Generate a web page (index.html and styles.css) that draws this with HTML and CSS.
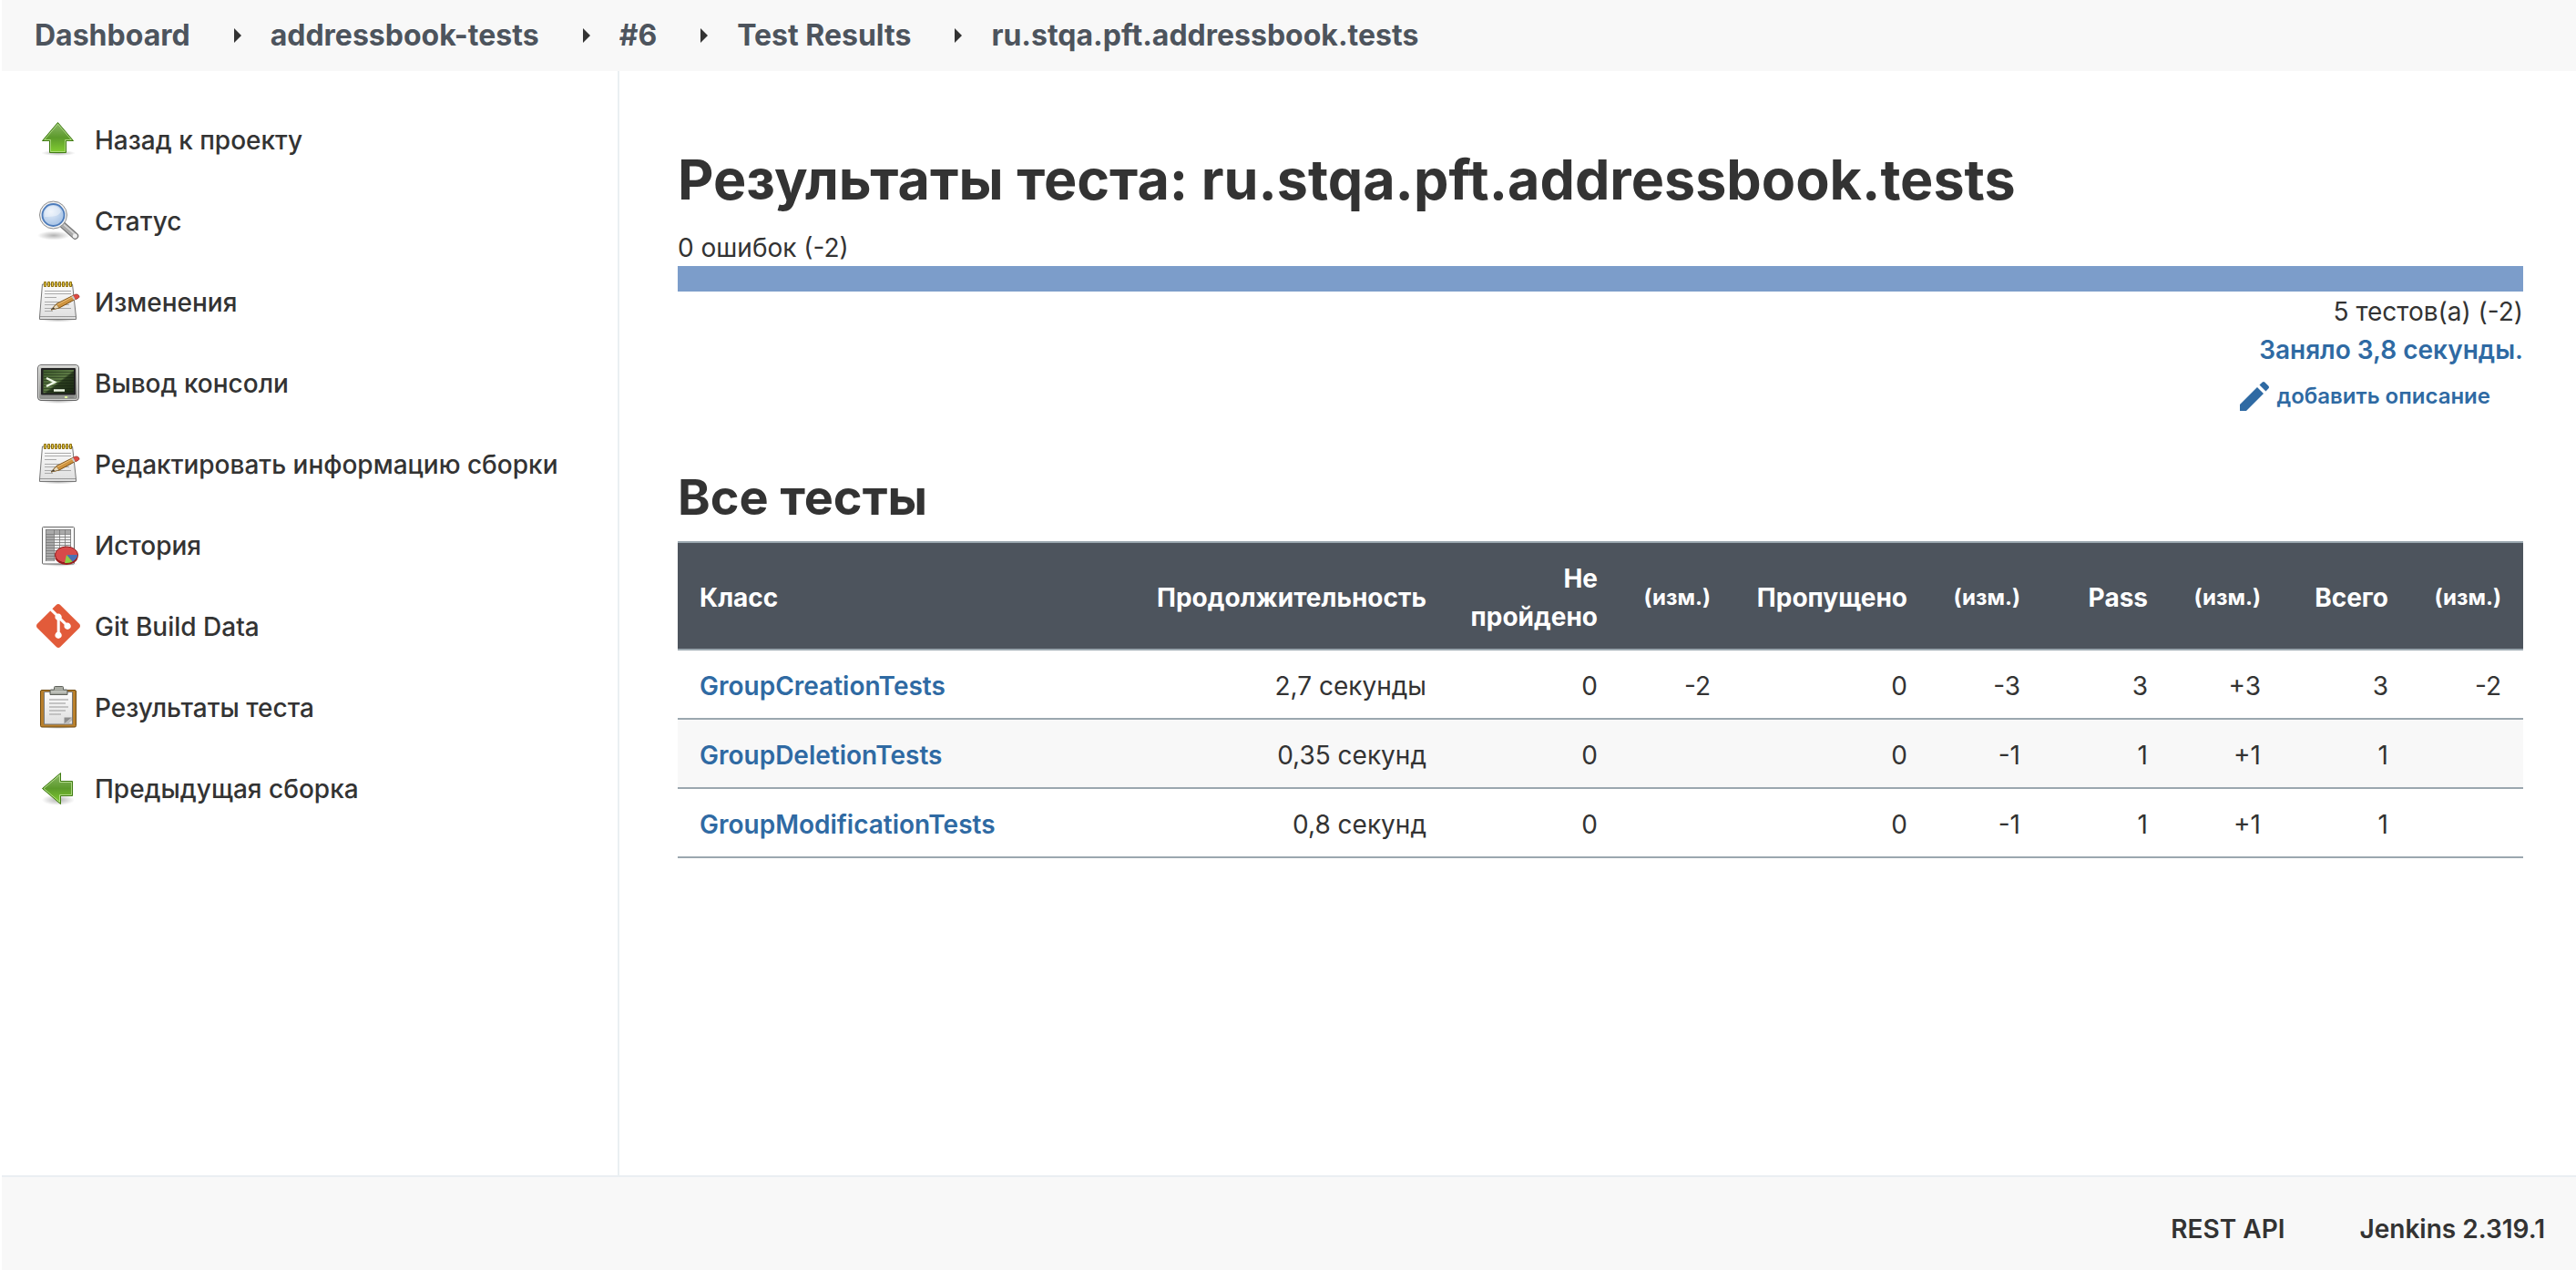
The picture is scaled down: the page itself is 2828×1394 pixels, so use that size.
FILE: index.html
```html
<!DOCTYPE html>
<html lang="ru">
<head>
<meta charset="utf-8">
<title>Результаты теста: ru.stqa.pft.addressbook.tests</title>
<link rel="stylesheet" href="styles.css">
</head>
<body>
<svg class="defs" aria-hidden="true">
  <defs>
    <linearGradient id="green" x1="0" y1="0" x2="0" y2="1"><stop offset="0" stop-color="#8db86a"/><stop offset=".5" stop-color="#5c9a2b"/><stop offset="1" stop-color="#83cf32"/></linearGradient>
    <linearGradient id="paper" x1="0" y1="0" x2="0" y2="1"><stop offset="0" stop-color="#fdfdfd"/><stop offset="1" stop-color="#dedede"/></linearGradient>
    <linearGradient id="metal" x1="0" y1="0" x2="0" y2="1"><stop offset="0" stop-color="#d4d5d1"/><stop offset="1" stop-color="#8b8d89"/></linearGradient>
    <linearGradient id="screen" x1="0" y1="0" x2="1" y2="1"><stop offset="0" stop-color="#3d5a2c"/><stop offset=".5" stop-color="#5d7a45"/><stop offset=".55" stop-color="#2b3d1f"/><stop offset="1" stop-color="#1c2a15"/></linearGradient>
    <radialGradient id="lens" cx=".4" cy=".35" r=".7"><stop offset="0" stop-color="#e6effa"/><stop offset="1" stop-color="#a3c0e4"/></radialGradient>
    <radialGradient id="shade"><stop offset="0" stop-color="#000" stop-opacity=".3"/><stop offset="1" stop-color="#000" stop-opacity="0"/></radialGradient>
    <symbol id="notepad" viewBox="0 0 48 48">
      <ellipse cx="24" cy="44" rx="20" ry="2.500" fill="url(#shade)"/>
      <path d="M6.500 5h33l4 36v2.500h-40V41z" fill="url(#paper)" stroke="#777" stroke-linejoin="round"/>
      <path d="M4 40.500h39" stroke="#999"/>
      <path d="M9 12.500h29M9 15.500h29M9 19.500h13M9 24.500h29M9 27.500h27M9 31.500h29M9 34.500h9" stroke="#aaa"/>
      <g fill="#e8cf50" stroke="#8a6b0a"><path d="M8.500 2.500h2v5h-2zM12.500 2.500h2v5h-2zM16.500 2.500h2v5h-2zM20.500 2.500h2v5h-2zM24.500 2.500h2v5h-2zM28.500 2.500h2v5h-2zM32.500 2.500h2v5h-2zM36.500 2.500h2v5h-2z"/></g>
      <path d="M16 33l6-6.500L41 17l2.500 4L25 31z" fill="#cf9440" stroke="#7a4e12" stroke-linejoin="round"/>
      <path d="M22.500 27.500L41 18" stroke="#eec27c"/>
      <path d="M16 33l6-6 3 4z" fill="#eadbbd" stroke="#7a5a28" stroke-width=".6"/><path d="M16 33l3-2.800 1 1.600z" fill="#333"/>
      <path d="M40 17.500l3-1.500q3-.5 4 2 .3 1.500-1 2.200l-3 1.600z" fill="#e04a42" stroke="#8e2a22" stroke-width=".7"/><path d="M38.500 18.200l1.800-.9 2.500 4.200-1.800.9z" fill="#c9cbc8"/>
    </symbol>
  </defs>
</svg>

<header class="topbar">
  <nav aria-label="Навигация">
    <ol class="crumbs">
      <li><a href="#">Dashboard</a></li>
      <li><a href="#">addressbook-tests</a></li>
      <li><a href="#">#6</a></li>
      <li><a href="#">Test Results</a></li>
      <li><a href="#">ru.stqa.pft.addressbook.tests</a></li>
    </ol>
  </nav>
</header>

<div class="page">
  <aside class="side">
    <nav class="tasks" aria-label="Задачи">
      <a href="#">
        <svg class="icon" viewBox="0 0 48 48"><ellipse cx="24" cy="39" rx="19" ry="3" fill="url(#shade)"/><path d="M23.500 5.500L40.500 25.500H32.500V38.500H14.500V25.500H6.500z" fill="url(#green)" stroke="#3f7a12" stroke-linejoin="round"/><path d="M23.500 7.200L38.400 24.500H31.500V37.500H15.500V24.500H8.700z" fill="none" stroke="#b6e08c" stroke-opacity=".8"/></svg>
        <span>Назад к проекту</span></a>
      <a href="#">
        <svg class="icon" viewBox="0 0 48 48"><ellipse cx="19" cy="40.500" rx="18" ry="5" fill="url(#shade)"/><path d="M29 29L42.500 41" stroke="#6e6e6e" stroke-width="7.500" stroke-linecap="round"/><path d="M29 29L42.500 41" stroke="#aaa" stroke-width="5.500" stroke-linecap="round"/><path d="M30 28.500L42 39" stroke="#d8d8d8" stroke-width="1.500"/><circle cx="42.300" cy="41" r="2.500" fill="#eee"/><circle cx="18.500" cy="18" r="15" fill="#f2f2f2" stroke="#8c8c8c"/><circle cx="18.500" cy="18" r="12" fill="url(#lens)" stroke="#4d7cbb" stroke-width="1.800"/><path d="M9 20a9.500 9.500 0 0 1 18-6q-2 5-9 5.500-5 .5-9 .5z" fill="#fff" opacity=".4"/></svg>
        <span>Статус</span></a>
      <a href="#"><svg class="icon"><use href="#notepad"/></svg><span>Изменения</span></a>
      <a href="#">
        <svg class="icon" viewBox="0 0 48 48"><ellipse cx="24" cy="44" rx="20" ry="3" fill="url(#shade)"/><rect x="1.500" y="4.500" width="45" height="39" rx="3.500" fill="url(#metal)" stroke="#666"/><rect x="2.500" y="5.500" width="43" height="37" rx="2.500" fill="none" stroke="#eee" stroke-opacity=".7"/><rect x="5" y="8" width="38" height="29.500" rx="1" fill="#222"/><rect x="7.500" y="10" width="33.500" height="25.500" fill="url(#screen)"/><path d="M8 12.500h33M8 15.500h33M8 18.500h33M8 21.500h33M8 24.500h33M8 27.500h33M8 30.500h33M8 33.500h33" stroke="#132010" stroke-opacity=".45"/><path d="M11 19l9 4.500-9 4.500" fill="none" stroke="#eff8e6" stroke-width="2.500"/><path d="M19 32.500h12" stroke="#eff8e6" stroke-width="2.500"/><rect x="31" y="39" width="3" height="2" fill="#ddf59a"/><path d="M36 40h5" stroke="#777"/></svg>
        <span>Вывод консоли</span></a>
      <a href="#"><svg class="icon"><use href="#notepad"/></svg><span>Редактировать информацию сборки</span></a>
      <a href="#">
        <svg class="icon" viewBox="0 0 48 48"><ellipse cx="26" cy="45" rx="20" ry="3" fill="url(#shade)"/><rect x="6.500" y="4.500" width="35" height="40.500" rx="1" fill="#fafafa" stroke="#666"/><rect x="10" y="7" width="28" height="35" fill="#eee"/><path d="M10 7h28v5H19v30h-9z" fill="#aaa"/><path d="M10 7.500h28M10 12.500h28M10 15.500h28M10 18.500h28M10 21.500h28M10 24.500h28M10 27.500h28M10 30.500h28M10 33.500h28M10 36.500h28M10 39.500h28M10.500 7v35M19.500 7v35M25.500 7v35M31.500 7v35M37.500 7v35" stroke="#777" stroke-width=".8"/><ellipse cx="33" cy="37" rx="12.500" ry="9" fill="#9e1f1f"/><ellipse cx="33" cy="35" rx="12.500" ry="9" fill="#d84a4a" stroke="#8e1c1c"/><path d="M33 35h12q0 4-5.500 7.500z" fill="#4a6fb4"/><path d="M33 35l6.500 7.500q-4 2-8.500 1.500z" fill="#8fd044"/></svg>
        <span>История</span></a>
      <a href="#">
        <svg class="icon" viewBox="0 0 24 24"><path fill="#e25b3a" d="M23.546 10.930L13.067.452c-.604-.603-1.582-.603-2.188 0L8.708 2.627l2.760 2.760c.645-.215 1.379-.070 1.889.441.516.515.658 1.258.438 1.900l2.658 2.660c.645-.223 1.387-.078 1.900.435.721.720.721 1.884 0 2.604-.719.719-1.881.719-2.600 0-.539-.541-.674-1.337-.404-1.996L12.860 8.955v6.525c.176.086.342.203.488.348.713.721.713 1.883 0 2.600-.719.721-1.889.721-2.609 0-.719-.719-.719-1.879 0-2.598.182-.180.387-.316.605-.406V8.835c-.217-.091-.424-.222-.600-.401-.545-.545-.676-1.342-.396-2.009L7.636 3.700.450 10.881c-.600.605-.600 1.584 0 2.189l10.480 10.477c.604.604 1.582.604 2.186 0l10.430-10.430c.605-.603.605-1.582 0-2.187"/></svg>
        <span>Git Build Data</span></a>
      <a href="#">
        <svg class="icon" viewBox="0 0 48 48"><ellipse cx="24" cy="46" rx="20" ry="2" fill="url(#shade)"/><rect x="4.500" y="5.500" width="39" height="40.500" rx="1.500" fill="#b9802c" stroke="#6e4a12"/><path d="M8.500 7.500h31v35.500h-31z" fill="url(#paper)" stroke="#777"/><path d="M14 16h21M14 20h18M14 24h21M14 28h18M14 32h13" stroke="#b5b5b5" stroke-width="1.600"/><path d="M30.500 42.500v-7h8.500z" fill="#8d8d8d"/><path d="M39 35.500v3l-4 4h-4.500z" fill="#bbb"/><path d="M19.500 5V2.500q0-1 1-1h8q1 0 1 1V5h3.500q1 0 1 1v4.500h-19V6q0-1 1-1z" fill="#a9aca4" stroke="#5e615b"/><path d="M16 7.500h17" stroke="#d4d6d0"/></svg>
        <span>Результаты теста</span></a>
      <a href="#">
        <svg class="icon" viewBox="0 0 48 48"><ellipse cx="24" cy="37" rx="18" ry="6" fill="url(#shade)"/><path d="M6.500 24.500L26.500 7.500V16.500H39.500V32.500H26.500V41.500z" fill="url(#green)" stroke="#3f7a12" stroke-linejoin="round"/><path d="M8.100 24.500L25.500 9.700V17.500H38.500V31.500H25.500V39.300z" fill="none" stroke="#c0e69a" stroke-opacity=".8"/></svg>
        <span>Предыдущая сборка</span></a>
    </nav>
  </aside>

  <main class="main">
    <h1>Результаты теста: ru.stqa.pft.addressbook.tests</h1>
    <section class="summary">
      <div class="line">0 ошибок (-2)</div>
      <div class="bar"></div>
      <div class="line right">5 тестов(а) (-2)</div>
      <div class="line right"><a class="link" href="#">Заняло 3,8 секунды.</a></div>
      <a class="describe" href="#">
        <svg class="pencil" viewBox="0 0 32 32"><path d="M0 25L19 6l7 7L7 32H0zM21.500 3.500L24.700.500q1.300-1 2.600 0l4.200 4.200q1 1.300 0 2.600L28.500 10.500z"/></svg>
        <span>добавить описание</span></a>
    </section>
    <h2>Все тесты</h2>
    <table class="results">
      <colgroup><col><col class="c-time"><col class="c-fail"><col class="c-diff"><col class="c-skip"><col class="c-diff"><col class="c-count"><col class="c-diff"><col class="c-count"><col class="c-diff"></colgroup>
      <thead>
        <tr><th>Класс</th><th>Продолжительность</th><th>Не пройдено</th><th class="diff">(изм.)</th><th>Пропущено</th><th class="diff">(изм.)</th><th>Pass</th><th class="diff">(изм.)</th><th>Всего</th><th class="diff">(изм.)</th></tr>
      </thead>
      <tbody>
        <tr><td><a class="link" href="#">GroupCreationTests</a></td><td>2,7 секунды</td><td>0</td><td>-2</td><td>0</td><td>-3</td><td>3</td><td>+3</td><td>3</td><td>-2</td></tr>
        <tr><td><a class="link" href="#">GroupDeletionTests</a></td><td>0,35 секунд</td><td>0</td><td></td><td>0</td><td>-1</td><td>1</td><td>+1</td><td>1</td><td></td></tr>
        <tr><td><a class="link" href="#">GroupModificationTests</a></td><td>0,8 секунд</td><td>0</td><td></td><td>0</td><td>-1</td><td>1</td><td>+1</td><td>1</td><td></td></tr>
      </tbody>
    </table>
  </main>
</div>

<footer class="footer">
  <a href="#">REST API</a>
  <a href="#">Jenkins 2.319.1</a>
</footer>
</body>
</html>
```
FILE: styles.css
```css
* { box-sizing: border-box; }
body {
  margin: 0;
  padding-left: 2px;
  min-height: 100vh;
  display: flex;
  flex-direction: column;
  background: #fff;
  color: #333;
  font: 400 28px/42px Inter, "Liberation Sans", sans-serif;
}
a { color: inherit; text-decoration: none; }
.defs { position: absolute; width: 0; height: 0; }

.topbar { background: #f8f8f8; padding: 0 36px; }
.crumbs {
  display: flex;
  margin: 0;
  padding: 0;
  list-style: none;
  font-size: 32px;
  font-weight: 700;
  line-height: 78px;
  color: #4d545d;
}
.crumbs li { display: flex; align-items: center; }
.crumbs li + li::before {
  content: "";
  margin: 0 32px 0 48px;
  border-left: 8px solid #333;
  border-top: 8px solid transparent;
  border-bottom: 8px solid transparent;
}

.page { flex: 1; display: flex; }
.side {
  flex: none;
  width: 678px;
  padding: 30px 38px;
  border-right: 2px solid #eaeff2;
}
.tasks { display: flex; flex-direction: column; font-weight: 500; }
.tasks a { display: flex; align-items: center; gap: 16px; min-height: 89px; white-space: nowrap; }
.tasks span { padding-top: 2px; }
.icon { flex: none; width: 48px; height: 48px; }

.main { flex: 1; min-width: 0; padding: 80px 58px; }
.main { padding-left: 64px; }
h1, h2 { margin: 0; font-weight: 700; }
h1 { font-size: 61px; line-height: 78px; margin-bottom: 14px; }
h2 { font-size: 54px; line-height: 68px; margin-bottom: 14px; }
.summary { display: flex; flex-direction: column; margin-bottom: 56px; }
.line { padding-top: 2px; line-height: 40px; }
.bar { height: 28px; background: #7c9dca; }
.right { text-align: right; }
.link { color: #2f6aa3; font-weight: 600; }
.describe {
  display: flex;
  align-items: center;
  align-self: flex-end;
  gap: 8px;
  margin-top: 10px;
  margin-right: 36px;
  color: #2f6aa3;
  font-size: 24px;
  font-weight: 600;
}
.pencil { width: 32px; height: 32px; fill: currentColor; }

.results { width: 100%; table-layout: fixed; border-collapse: collapse; }
.results th, .results td {
  padding: 18px 24px 14px;
  border-top: 2px solid #9ba7af;
  border-bottom: 2px solid #9ba7af;
  text-align: right;
}
.results th { background: #4d545d; color: #fff; font-weight: 700; }
.results .diff { font-size: 24px; white-space: nowrap; }
.results th:first-child, .results td:first-child { text-align: left; }
.results tbody tr:nth-child(even) { background: #f8f8f8; }
.c-time { width: 344px; }
.c-fail { width: 188px; }
.c-skip { width: 216px; }
.c-diff { width: 124px; }
.c-count { width: 140px; }

.footer {
  display: flex;
  justify-content: flex-end;
  gap: 82px;
  padding: 36px 34px 24px;
  border-top: 2px solid #eaeff2;
  background: #f8f8f8;
  font-weight: 600;
}
```
